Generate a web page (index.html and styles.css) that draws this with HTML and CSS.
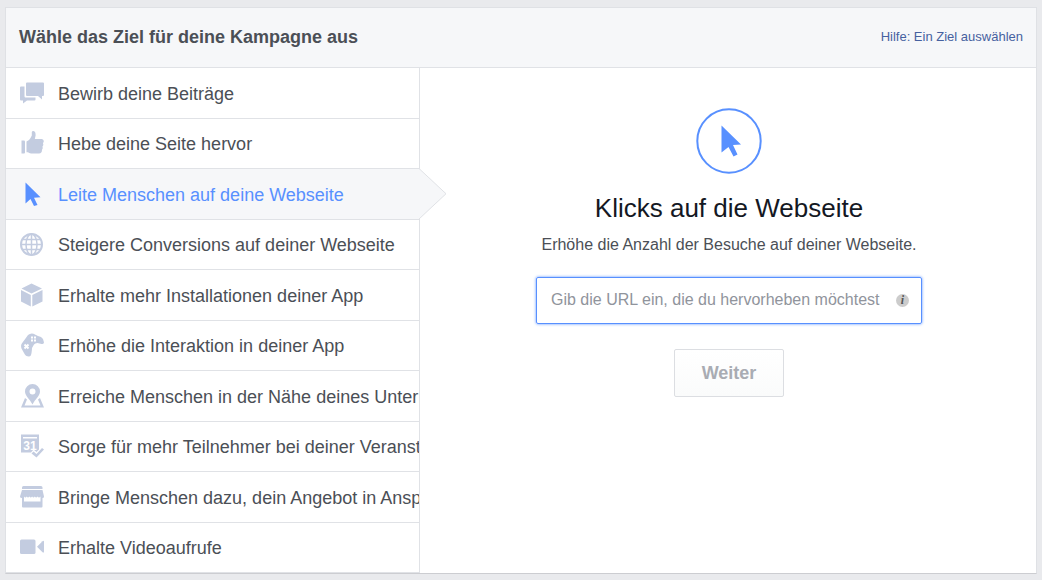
FILE: index.html
```html
<!DOCTYPE html>
<html lang="de">
<head>
<meta charset="utf-8">
<title>Wähle das Ziel für deine Kampagne aus</title>
<link rel="stylesheet" href="styles.css">
</head>
<body>
<main class="card">
  <header class="card-header">
    <h1 class="card-title">Wähle das Ziel für deine Kampagne aus</h1>
    <a class="help-link" href="#">Hilfe: Ein Ziel auswählen</a>
  </header>
  <div class="card-body">
    <nav class="goals">
      <a class="goal" href="#">
        <svg class="icon" viewBox="0 0 24 24"><path d="M7 1.500H23Q24 1.500 24 2.500V14Q24 15 23 15H22V18.500L18 15H7Q6 15 6 14V2.500Q6 1.500 7 1.500Z"/><path d="M1 5.500H4.500V15.500Q4.500 16.500 5.500 16.500H15.500V18.500Q15.500 19.500 14.500 19.500H7L3 22.500V19.500H1Q0 19.500 0 18.500V6.500Q0 5.500 1 5.500Z"/></svg>
        <span class="goal-label">Bewirb deine Beiträge</span></a>
      <a class="goal" href="#">
        <svg class="icon" viewBox="0 0 24 24"><path d="M1.500 9.500H4Q5 9.500 5 10.500V21.500Q5 22.500 4 22.500H1.500Z"/><path d="M6.500 10.500Q9 10 10.500 7L11.800 4.500V1Q12 0 13.500.1Q15.800.5 15.600 4.500L14.800 8H22Q24 8.500 23.800 10.500L23 12.300Q24 14 22.500 15.500Q23.300 17.500 22 18.700Q22 22.500 19 22.500H11Q9 22.300 8 21.300H6.500Z"/></svg>
        <span class="goal-label">Hebe deine Seite hervor</span></a>
      <a class="goal goal-active" href="#" aria-current="page">
        <svg class="icon" viewBox="0 0 24 24"><path d="M5.500.5L20.500 15.200L14 15.800L17.500 23L14 24L10.500 17L5.500 21.500Z"/></svg>
        <span class="goal-label">Leite Menschen auf deine Webseite</span>
        <svg class="pointer" viewBox="0 0 28 52" preserveAspectRatio="none"><path class="pointer-fill" d="M0 .5L27 26L0 51.500Z"/><path class="pointer-edge" d="M0 .5L27 26L0 51.500"/></svg></a>
      <a class="goal" href="#">
        <svg class="icon icon-line" viewBox="0 0 24 24"><circle cx="11.500" cy="12.500" r="10.500" stroke-width="2"/><path d="M11.500 2.500V22.500M1 12.500H22M3 7.500H20M3 17.500H20"/><ellipse cx="11.500" cy="12.500" rx="5.500" ry="10.500"/></svg>
        <span class="goal-label">Steigere Conversions auf deiner Webseite</span></a>
      <a class="goal" href="#">
        <svg class="icon" viewBox="0 0 24 24"><path d="M11.500.5L22 5.500L11.500 10.500L1.500 5.500ZM1 7L10.800 12V23.500L1 18.500ZM22.500 7L12.300 12V23.500L22.500 18.500Z"/></svg>
        <span class="goal-label">Erhalte mehr Installationen deiner App</span></a>
      <a class="goal" href="#">
        <svg class="icon" viewBox="0 0 24 24"><path d="M8 2Q10.500-.2 13.500.7L18 3Q21.500 3.500 23 6L24 9.500Q23.500 11.500 21.500 11L17.500 10Q15 10 14 11.500L12 15Q12 17 11.500 20Q11 23.500 9 23.500Q5.500 23.500 4 20L1.500 15.500Q.5 12.500 1.800 10.500L5.500 5.500Z"/><path class="cut" d="M11 3.500H13V5.500H11ZM14 3.500H16V5.500H14ZM11 6.500H13V8.500H11ZM14 6.500H16V8.500H14Z"/><path class="cut-line" d="M4.500 11.500L8.500 15.500M8.500 11.500L4.500 15.500"/></svg>
        <span class="goal-label">Erhöhe die Interaktion in deiner App</span></a>
      <a class="goal" href="#">
        <svg class="icon" viewBox="0 0 24 24"><path fill-rule="evenodd" d="M12.500 0A7.500 7.500 0 0 1 20 7.500C20 12 15.500 14.500 12.500 20.500C9.500 14.500 5 12 5 7.500A7.500 7.500 0 0 1 12.500 0ZM12.500 4.500A3 3 0 1 0 12.500 10.500A3 3 0 1 0 12.500 4.500Z"/><path d="M5 14L7 15.500L4.500 21.500H20.500L18 15.500L20 14L24 23.500H1Z"/></svg>
        <span class="goal-label">Erreiche Menschen in der Nähe deines Unternehmens</span></a>
      <a class="goal" href="#">
        <svg class="icon" viewBox="0 0 24 24"><path d="M1 .5H19V15.500L16.500 18L13.500 15.500L11 18.500H1Z"/><path class="cut" d="M3 3H17V4.500H3Z"/><text class="cut icon-day" x="10" y="15.500" text-anchor="middle">31</text><path d="M13.500 17.500L16.500 20L22 14L24 15.500L16.500 23.500L11.500 19.500Z"/></svg>
        <span class="goal-label">Sorge für mehr Teilnehmer bei deiner Veranstaltung</span></a>
      <a class="goal" href="#">
        <svg class="icon" viewBox="0 0 24 24"><path d="M2 2.500Q2 1 3.500 1H21Q22.500 1 22.500 2.500V4H2ZM2 5H22.500L24 11.500Q24 13 22.500 13V21.500Q22.500 22.500 21.500 22.500H3Q2 22.500 2 21.500V13Q0 13 0 11.500Z"/><path class="cut" d="M4 11.500Q5.400 13.500 6.700 11.500Q8 13.500 9.400 11.500Q10.700 13.500 12.100 11.500Q13.500 13.500 14.800 11.500Q16.200 13.500 17.500 11.500Q19 13.500 20.500 11.500V16.500H4Z"/></svg>
        <span class="goal-label">Bringe Menschen dazu, dein Angebot in Anspruch zu nehmen</span></a>
      <a class="goal" href="#">
        <svg class="icon" viewBox="0 0 24 24"><rect y="4.500" width="15.500" height="14.500" rx="1.500"/><path d="M17 11.700L22.500 6.200Q24 5.200 24 6.700V16.700Q24 18.200 22.500 17.200Z"/></svg>
        <span class="goal-label">Erhalte Videoaufrufe</span></a>
    </nav>
    <form class="detail">
      <svg class="badge" viewBox="0 0 66 66"><circle cx="33" cy="33" r="31.700"/><path d="M25.500 17.500L45 36.500L37 37L41.500 46.500L37.500 48.500L32.500 39L25.500 44.500Z"/></svg>
      <h2 class="detail-title">Klicks auf die Webseite</h2>
      <label class="detail-text" for="url">Erhöhe die Anzahl der Besuche auf deiner Webseite.</label>
      <div class="url-field">
        <input class="url-input" id="url" type="url" placeholder="Gib die URL ein, die du hervorheben möchtest">
        <button class="info" type="button">i</button>
      </div>
      <button class="next" type="submit">Weiter</button>
    </form>
  </div>
</main>
</body>
</html>
```
FILE: styles.css
```css
* {
  box-sizing: border-box;
}

body {
  display: flex;
  min-height: 100vh;
  margin: 0;
  padding: 7px 5px 6px;
  background: #e9eaed;
  color: #4b4f56;
  font-family: "Liberation Sans", Arial, sans-serif;
}

.card {
  display: flex;
  flex: 1;
  flex-direction: column;
  min-width: 0;
  border: 1px solid #dfe1e5;
  border-bottom-color: #cccdd1;
  background: #fff;
}

.card-header {
  display: flex;
  align-items: center;
  justify-content: space-between;
  height: 60px;
  padding: 0 13px 2px;
  border-bottom: 1px solid #e0e2e6;
  background: #f6f7f9;
}

.card-title {
  margin: 0;
  font-size: 18px;
  line-height: 24px;
}

.help-link {
  color: #4661a0;
  font-size: 13px;
  text-decoration: none;
}

.card-body {
  display: grid;
  flex: 1;
  grid-template-columns: minmax(0, 414fr) minmax(0, 616fr);
}

.goals {
  display: grid;
  grid-auto-rows: 1fr;
  border-right: 1px solid #e0e2e6;
}

.goal {
  position: relative;
  display: flex;
  align-items: center;
  gap: 14px;
  min-width: 0;
  padding-left: 14px;
  border-bottom: 1px solid #e0e2e6;
  color: #4b4f56;
  font-size: 18px;
  line-height: 24px;
  text-decoration: none;
}

.goal-active {
  background: #f6f7f9;
  color: #5890ff;
}

.goal-label {
  flex: 1;
  min-width: 0;
  padding-top: 2px;
  overflow: hidden;
  white-space: nowrap;
}

.icon {
  flex: none;
  width: 24px;
  height: 24px;
  fill: #c3cce0;
}

.goal-active .icon {
  fill: #5890ff;
}

.goal .icon-line {
  fill: none;
  stroke: #c3cce0;
  stroke-width: 1.5;
}

.cut {
  fill: #fff;
}

.cut-line {
  stroke: #fff;
  stroke-width: 2;
}

.icon-day {
  font-size: 12px;
  font-weight: bold;
}

.pointer {
  position: absolute;
  top: -1px;
  left: 100%;
  width: 28px;
  height: calc(100% + 2px);
}

.pointer-fill {
  fill: #f6f7f9;
}

.pointer-edge {
  fill: none;
  stroke: #e0e2e6;
}

.detail {
  display: flex;
  flex-direction: column;
  align-items: center;
  padding: 40px 16px 16px 18px;
}

.badge {
  width: 66px;
  height: 66px;
  fill: #5890ff;
}

.badge circle {
  fill: none;
  stroke: #5890ff;
  stroke-width: 2;
}

.detail-title {
  margin: 18px 0 0;
  color: #141823;
  font-size: 26px;
  font-weight: normal;
  line-height: 32px;
}

.detail-text {
  margin-top: 11px;
  font-size: 16px;
  line-height: 20px;
}

.url-field {
  display: flex;
  align-items: center;
  width: 100%;
  max-width: 386px;
  height: 47px;
  margin-top: 22px;
  padding: 0 12px 0 14px;
  border: 1px solid #5890ff;
  border-radius: 2px;
  box-shadow: 0 0 3px #5890ff;
}

.url-input {
  flex: 1;
  min-width: 0;
  padding: 0 0 2px;
  border: 0;
  outline: 0;
  background: none;
  color: #4b4f56;
  font: 16px "Liberation Sans", Arial, sans-serif;
}

.url-input::placeholder {
  color: #90949c;
}

.info {
  width: 13px;
  height: 13px;
  padding: 0;
  border: 0;
  border-radius: 50%;
  background: #ccc;
  color: #555;
  font: italic bold 12px/13px "Liberation Serif", serif;
}

.next {
  height: 48px;
  margin-top: 25px;
  padding: 0 27px;
  border: 1px solid #dcdee2;
  border-radius: 2px;
  background: linear-gradient(#fff, #fafbfb);
  color: #a9acb3;
  font: bold 18px "Liberation Sans", Arial, sans-serif;
}
```
